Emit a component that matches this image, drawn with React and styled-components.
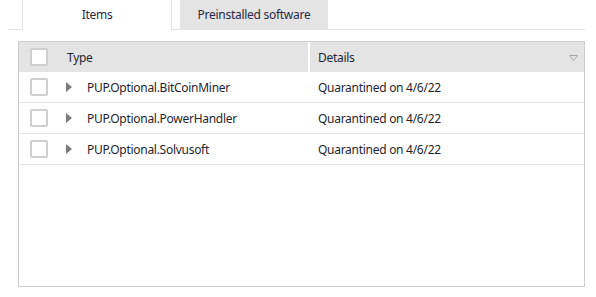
import React from "react";
import styled, { createGlobalStyle } from "styled-components";

const Global = createGlobalStyle`
  html, body { margin: 0; padding: 0; background: #ffffff; }
  body { font-family: "Segoe UI", "Noto Sans", "Open Sans", sans-serif; font-size: 12px; letter-spacing: -0.28px; color: #1f1f2e; }
`;

const Page = styled.div`
  width: 596px;
  height: 297px;
  box-sizing: border-box;
  padding: 0 11px 0 8px;
  display: flex;
  flex-direction: column;
`;

const TabStrip = styled.div`
  display: flex;
  align-items: flex-end;
  height: 30px;
  box-sizing: border-box;
  border-bottom: 1px solid #e2e2e2;
  padding-left: 14px;
  gap: 8px;
`;

const Tab = styled.div`
  box-sizing: border-box;
  height: ${(p) => (p.$active ? "30px" : "29px")};
  width: ${(p) => p.$w}px;
  display: flex;
  align-items: center;
  justify-content: center;
  padding-bottom: ${(p) => (p.$active ? "1px" : "0")};
  margin-bottom: ${(p) => (p.$active ? "-1px" : "0")};
  background: ${(p) => (p.$active ? "#ffffff" : "#e4e4e4")};
  border-left: ${(p) => (p.$active ? "1px solid #e2e2e2" : "none")};
  border-right: ${(p) => (p.$active ? "1px solid #e2e2e2" : "none")};
  color: #2a2a44;
  font-size: 12px;
`;

const TableBox = styled.div`
  margin: 11px 0 0 10px;
  width: 567px;
  height: 246px;
  box-sizing: border-box;
  border: 1px solid #cccccc;
  display: flex;
  flex-direction: column;
`;

const Cols = "40px 249px 1fr";

const Header = styled.div`
  display: grid;
  grid-template-columns: ${Cols};
  height: 30px;
  background: #e4e4e4;
`;

const HeadCell = styled.div`
  display: flex;
  align-items: center;
  padding-left: ${(p) => p.$pl || 0}px;
  border-left: ${(p) => (p.$sep ? "2px solid #ffffff" : "none")};
  justify-content: ${(p) => (p.$center ? "center" : "flex-start")};
  position: relative;
  color: #1f1f2e;
`;

const Row = styled.div`
  display: grid;
  grid-template-columns: ${Cols};
  height: 31px;
  box-sizing: border-box;
  border-bottom: 1px solid #e4e4e4;
`;

const Cell = styled.div`
  display: flex;
  align-items: center;
  padding-left: ${(p) => p.$pl || 0}px;
  justify-content: ${(p) => (p.$center ? "center" : "flex-start")};
  color: #1f1f2e;
  white-space: nowrap;
`;

const Check = styled.div`
  width: 18px;
  height: 18px;
  box-sizing: border-box;
  border: 2px solid #cfcfcf;
  border-radius: 2px;
  background: #ffffff;
`;

const Expander = styled.span`
  width: 0;
  height: 0;
  border-top: 5px solid transparent;
  border-bottom: 5px solid transparent;
  border-left: 6px solid #7a7a7a;
  margin-right: 15px;
`;

const SortIcon = styled.svg`
  position: absolute;
  right: 6px;
  top: 13px;
`;

const items = [
  "PUP.Optional.BitCoinMiner",
  "PUP.Optional.PowerHandler",
  "PUP.Optional.Solvusoft",
];

export default function App() {
  return (
    <>
      <Global />
      <Page>
        <TabStrip>
          <Tab $active $w={150}>Items</Tab>
          <Tab $w={148}>Preinstalled software</Tab>
        </TabStrip>
        <TableBox>
          <Header>
            <HeadCell $center>
              <Check />
            </HeadCell>
            <HeadCell $pl={8}>Type</HeadCell>
            <HeadCell $sep $pl={8}>
              Details
              <SortIcon width="9" height="6" viewBox="0 0 9 6">
                <path d="M0.5 0.5 H8.5 L4.5 5.5 Z" fill="none" stroke="#a8a8a8" strokeWidth="1" />
              </SortIcon>
            </HeadCell>
          </Header>
          {items.map((t) => (
            <Row key={t}>
              <Cell $center>
                <Check />
              </Cell>
              <Cell $pl={7}>
                <Expander />
                {t}
              </Cell>
              <Cell $pl={10}>Quarantined on 4/6/22</Cell>
            </Row>
          ))}
        </TableBox>
      </Page>
    </>
  );
}
